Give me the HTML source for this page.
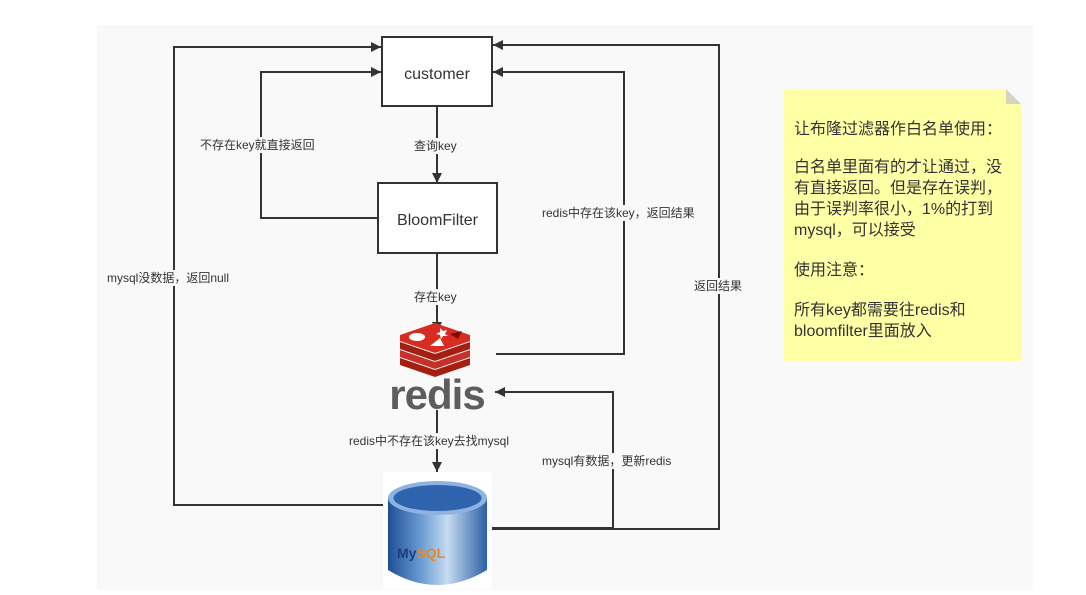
<!DOCTYPE html>
<html><head><meta charset="utf-8">
<style>
html,body{margin:0;padding:0;background:#fff;}
body{width:1086px;height:590px;overflow:hidden;position:relative;font-family:"Liberation Sans","Noto Sans CJK SC",sans-serif;}
svg text{font-family:"Liberation Sans","Noto Sans CJK SC",sans-serif;}
</style></head><body>
<svg width="1086" height="590" viewBox="0 0 1086 590" xmlns="http://www.w3.org/2000/svg">
<defs>
<marker id="a" viewBox="0 0 10 10" refX="10" refY="5" markerWidth="10" markerHeight="10" markerUnits="userSpaceOnUse" orient="auto">
<path d="M0,0 L10,5 L0,10 z" fill="#333"/></marker>
<linearGradient id="cyl" x1="0" x2="1"><stop offset="0" stop-color="#1e4f95"/><stop offset="0.35" stop-color="#6f9fd6"/><stop offset="0.6" stop-color="#c7dcf1"/><stop offset="1" stop-color="#2c5fa5"/></linearGradient>
</defs>
<rect x="97" y="25" width="936" height="565" fill="#f9f9f9"/>
<g stroke="#333" stroke-width="2" fill="none">
<polyline points="383,505 174,505 174,47 381,47" marker-end="url(#a)"/>
<polyline points="378,218 261,218 261,72 381,72" marker-end="url(#a)"/>
<polyline points="496,354 624,354 624,72 493,72" marker-end="url(#a)"/>
<polyline points="492,529 719,529 719,45 493,45" marker-end="url(#a)"/>
<polyline points="492,528 613,528 613,392 495,392" marker-end="url(#a)"/>
<line x1="437" y1="106" x2="437" y2="183" marker-end="url(#a)"/>
<line x1="437" y1="253" x2="437" y2="332" marker-end="url(#a)"/>
<line x1="437" y1="410" x2="437" y2="472" marker-end="url(#a)"/>
</g>
<rect x="382" y="37" width="110" height="69" fill="#fff" stroke="#333" stroke-width="2"/>
<text x="437" y="79" font-size="16" text-anchor="middle" fill="#333">customer</text>
<rect x="378" y="183" width="119" height="70" fill="#fff" stroke="#333" stroke-width="2"/>
<text x="437.5" y="225" font-size="16" text-anchor="middle" fill="#333">BloomFilter</text>
<g font-size="12" fill="#333">
<rect x="199" y="137" width="126" height="16" fill="#f9f9f9"/>
<text x="200" y="149">不存在key就直接返回</text>
<rect x="413" y="138" width="49" height="16" fill="#f9f9f9"/>
<text x="414" y="150">查询key</text>
<rect x="413" y="289" width="49" height="16" fill="#f9f9f9"/>
<text x="414" y="301">存在key</text>
<rect x="540" y="205" width="170" height="16" fill="#f9f9f9"/>
<text x="542" y="217">redis中存在该key，返回结果</text>
<rect x="106" y="270" width="136" height="16" fill="#f9f9f9"/>
<text x="107" y="282">mysql没数据，返回null</text>
<rect x="693" y="278" width="52" height="16" fill="#f9f9f9"/>
<text x="694" y="290">返回结果</text>
<rect x="348" y="433" width="178" height="16" fill="#f9f9f9"/>
<text x="349" y="445">redis中不存在该key去找mysql</text>
<rect x="541" y="453" width="143" height="16" fill="#f9f9f9"/>
<text x="542" y="465">mysql有数据，更新redis</text>
</g>
<g>
<path d="M400,358 L435,370 L470,358 L470,365 L435,377 L400,365z" fill="#a41e11"/>
<path d="M400,350 L435,362 L470,350 L470,357 L435,369 L400,357z" fill="#c6302b"/>
<path d="M400,342 L435,354 L470,342 L470,349 L435,361 L400,349z" fill="#a41e11"/>
<path d="M400,335 L435,323 L470,335 L470,341 L435,353 L400,341z" fill="#d82c20"/>
<ellipse cx="417" cy="337" rx="8" ry="4" fill="#fff"/>
<path d="M430,346 L440,338 L444,346z" fill="#fff"/>
<path d="M440,328 l3,3 4,-1 -2,4 3,2 -5,0 -2,3 -1,-4 -4,-1 4,-2z" fill="#fff"/>
<path d="M450,334 L462,331 L458,339z" fill="#7a0c00"/>
</g>
<text x="437" y="409" font-size="42" font-weight="bold" text-anchor="middle" fill="#5d5d5d" letter-spacing="-1">redis</text>
<rect x="383" y="472" width="109" height="117" fill="#fff"/>
<path d="M388,498 L388,570 Q437,600 487,570 L487,498z" fill="url(#cyl)"/>
<ellipse cx="437.5" cy="498" rx="49.5" ry="17" fill="#8fb3e0"/>
<ellipse cx="437.5" cy="498" rx="44" ry="13" fill="#2f63ad"/>
<text x="397" y="558" font-size="14" font-weight="bold" fill="#1a3e80">My<tspan fill="#e58a1f">SQL</tspan></text>
<path d="M784,89 L1006,89 L1021,104 L1021,361 L784,361z" fill="#ffffa6"/>
<path d="M1006,89 L1021,104 L1006,104z" fill="#d4d4c0"/>
<g font-size="16" fill="#333">
<text x="794" y="134">让布隆过滤器作白名单使用：</text>
<text x="794" y="172">白名单里面有的才让通过，没</text>
<text x="794" y="193">有直接返回。但是存在误判，</text>
<text x="794" y="214">由于误判率很小，1%的打到</text>
<text x="794" y="235">mysql，可以接受</text>
<text x="794" y="275">使用注意：</text>
<text x="794" y="315">所有key都需要往redis和</text>
<text x="794" y="336">bloomfilter里面放入</text>
</g>
</svg>
</body></html>
